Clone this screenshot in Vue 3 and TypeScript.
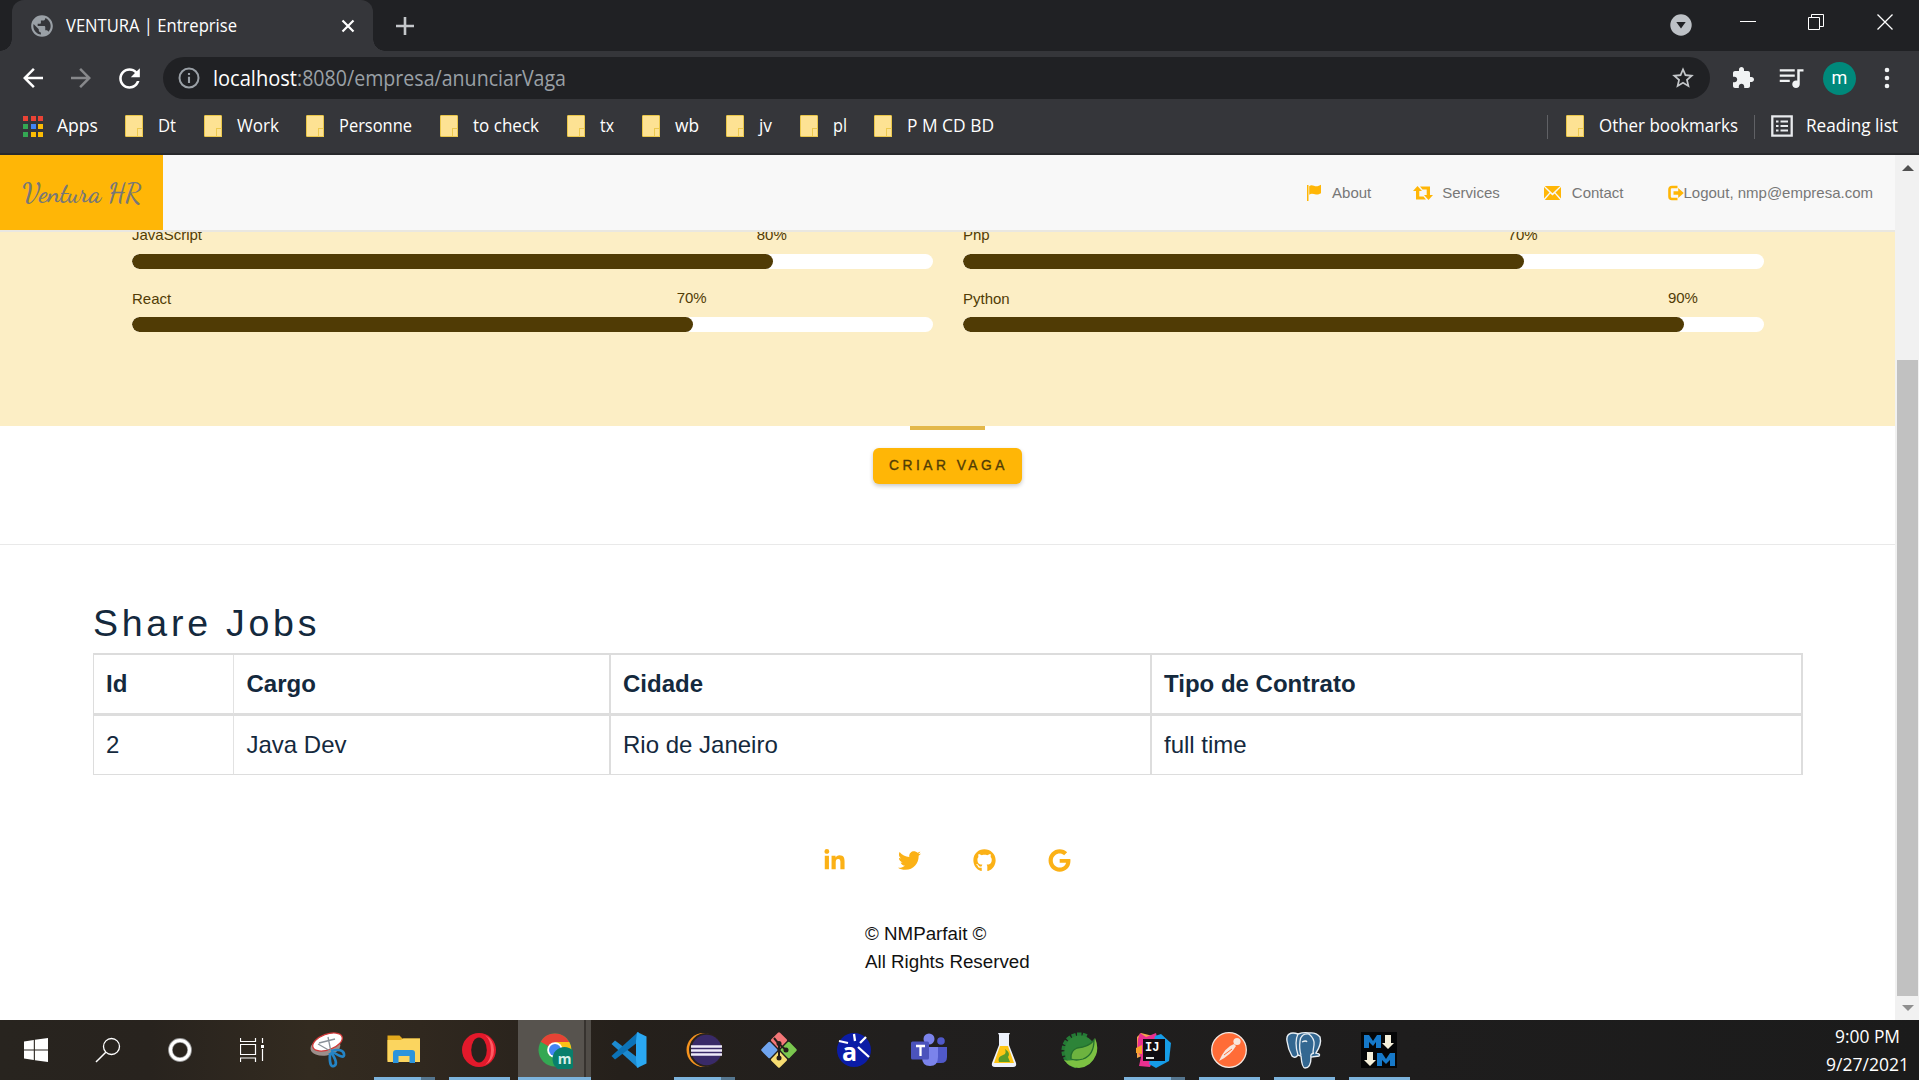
<script setup lang="ts">
import { h } from 'vue'

interface FitProps { text: string; w: number; size?: number; color?: string; family?: string; slant?: string; weight?: number }

// Single line of text set to an exact advance width.
const FitText = (p: FitProps) => {
  const size = p.size ?? 18
  const height = Math.round(size * 1.5)
  return h('svg', { width: p.w, height, style: 'display:block;overflow:visible;flex:none' }, [
    h('text', {
      x: 0, y: Math.round(size * 1.08), textLength: p.w, lengthAdjust: 'spacingAndGlyphs',
      fill: p.color ?? '#ffffff', 'font-size': size, 'font-style': p.slant ?? 'normal', 'font-weight': p.weight ?? 400,
      'font-family': p.family ?? '"Segoe UI", "Open Sans", "Noto Sans", sans-serif',
    }, p.text),
  ])
}
FitText.props = ['text', 'w', 'size', 'color', 'family', 'slant', 'weight']

const bookmarks: { name: string; w: number; gap: number }[] = [
  { name: 'Dt', w: 18, gap: 28 },
  { name: 'Work', w: 42, gap: 27 },
  { name: 'Personne', w: 73, gap: 28 },
  { name: 'to check', w: 66, gap: 28 },
  { name: 'tx', w: 14, gap: 28 },
  { name: 'wb', w: 24, gap: 27 },
  { name: 'jv', w: 13, gap: 28 },
  { name: 'pl', w: 14, gap: 27 },
  { name: 'P M CD BD', w: 87, gap: 0 },
]

const appColors: string[] = ['#ea4335', '#ea4335', '#ea4335', '#34a853', '#4285f4', '#fbbc04', '#34a853', '#fbbc04', '#fbbc04']

interface Skill { name: string; value: number }
const skillColumns: Skill[][] = [
  [{ name: 'JavaScript', value: 80 }, { name: 'React', value: 70 }],
  [{ name: 'Php', value: 70 }, { name: 'Python', value: 90 }],
]

const headers: string[] = ['Id', 'Cargo', 'Cidade', 'Tipo de Contrato']
const jobs: string[][] = [['2', 'Java Dev', 'Rio de Janeiro', 'full time']]

const social: string[] = [
  'M100.28 448H7.4V148.9h92.88zM53.79 108.1C24.09 108.1 0 83.5 0 53.8a53.79 53.79 0 0 1 107.58 0c0 29.7-24.1 54.3-53.79 54.3zM447.9 448h-92.68V302.4c0-34.7-.7-79.2-48.29-79.2-48.29 0-55.69 37.7-55.69 76.7V448h-92.78V148.9h89.08v40.8h1.3c12.4-23.5 42.69-48.3 87.88-48.3 94 0 111.28 61.9 111.28 142.3V448z',
  'M459.37 151.716c.325 4.548.325 9.097.325 13.645 0 138.72-105.583 298.558-298.558 298.558-59.452 0-114.68-17.219-161.137-47.106 8.447.974 16.568 1.299 25.34 1.299 49.055 0 94.213-16.568 130.274-44.832-46.132-.975-84.792-31.188-98.112-72.772 6.498.974 12.995 1.624 19.818 1.624 9.421 0 18.843-1.3 27.614-3.573-48.081-9.747-84.143-51.98-84.143-102.985v-1.299c13.969 7.797 30.214 12.67 47.431 13.319-28.264-18.843-46.781-51.005-46.781-87.391 0-19.492 5.197-37.36 14.294-52.954 51.655 63.675 129.3 105.258 216.365 109.807-1.624-7.797-2.599-15.918-2.599-24.04 0-57.828 46.782-104.934 104.934-104.934 30.213 0 57.502 12.67 76.67 33.137 23.715-4.548 46.456-13.32 66.599-25.34-7.798 24.366-24.366 44.833-46.132 57.827 21.117-2.273 41.584-8.122 60.426-16.243-14.292 20.791-32.161 39.308-52.628 54.253z',
  'M165.9 397.4c0 2-2.3 3.6-5.2 3.6-3.3.3-5.6-1.3-5.6-3.6 0-2 2.3-3.6 5.2-3.6 3-.3 5.6 1.3 5.6 3.6zM244.8 8C106.1 8 0 113.3 0 252c0 110.9 69.8 205.8 169.5 239.2 12.8 2.3 17.3-5.6 17.3-12.1 0-6.2-.3-40.4-.3-61.4 0 0-70 15-84.7-29.8 0 0-11.4-29.1-27.8-36.6 0 0-22.9-15.7 1.6-15.4 0 0 24.9 2 38.6 25.8 21.9 38.6 58.6 27.5 72.9 20.9 2.3-16 8.8-27.1 16-33.7-55.9-6.2-112.3-14.3-112.3-110.5 0-27.5 7.6-41.3 23.6-58.9-2.6-6.5-11.1-33.3 2.6-67.9 20.9-6.5 69 27 69 27 20-5.6 41.5-8.5 62.8-8.5s42.8 2.9 62.8 8.5c0 0 48.1-33.6 69-27 13.7 34.7 5.2 61.4 2.6 67.9 16 17.7 25.8 31.5 25.8 58.9 0 96.5-58.9 104.2-114.8 110.5 9.2 7.9 17 22.9 17 46.4 0 33.7-.3 75.4-.3 83.6 0 6.5 4.6 14.4 17.3 12.1C428.2 457.8 496 362.9 496 252 496 113.3 383.5 8 244.8 8z',
  'M488 261.8C488 403.3 391.1 504 248 504 110.8 504 0 393.2 0 256S110.8 8 248 8c66.8 0 123 24.5 166.3 64.9l-67.5 64.9C258.5 52.6 94.3 116.6 94.3 256c0 86.5 69.1 156.6 153.7 156.6 98.2 0 135-70.4 140.8-106.9H248v-85.3h236.1c2.3 12.7 3.9 24.9 3.9 41.4z',
]
const socialBoxes: string[] = ['0 0 448 512', '0 0 512 512', '0 0 496 512', '0 0 488 512']

interface Task { id: string; bar?: 'full' | 'split'; active?: boolean }
const tasks: Task[] = [
  { id: 'snip' }, { id: 'files', bar: 'split' }, { id: 'opera', bar: 'full' }, { id: 'chrome', active: true },
  { id: 'code' }, { id: 'eclipse', bar: 'split' }, { id: 'git' }, { id: 'astah' }, { id: 'teams' }, { id: 'flask' },
  { id: 'spring' }, { id: 'idea', bar: 'split' }, { id: 'postman', bar: 'full' }, { id: 'postgres', bar: 'full' }, { id: 'markdown', bar: 'full' },
]
const teeth: number[] = Array.from({ length: 10 }, (_, i) => 110 + i * 20)
</script>

<template>
  <div class="screen">
    <header class="chrome">
      <div class="tabstrip">
        <div class="tab">
          <svg class="globe" width="26" height="26" viewBox="0 0 24 24"><path fill="#9aa0a6" d="M12 2C6.48 2 2 6.48 2 12s4.48 10 10 10 10-4.48 10-10S17.52 2 12 2zm-1 17.93c-3.95-.49-7-3.85-7-7.93 0-.62.08-1.21.21-1.79L9 15v1c0 1.1.9 2 2 2v1.93zm6.9-2.54c-.26-.81-1-1.39-1.9-1.39h-1v-3c0-.55-.45-1-1-1H8v-2h2c.55 0 1-.45 1-1V7h2c1.1 0 2-.9 2-2v-.41c2.93 1.19 5 4.06 5 7.41 0 2.08-.8 3.97-2.1 5.39z" /></svg>
          <FitText class="tab-title" text="VENTURA | Entreprise" :w="171" />
          <svg class="tab-close" width="14" height="14" viewBox="0 0 14 14"><path d="M1.5 1.5l11 11M12.5 1.5l-11 11" stroke="#fff" stroke-width="2.2" /></svg>
        </div>
        <svg class="plus" width="18" height="18" viewBox="0 0 18 18"><path d="M9 0v18M0 9h18" stroke="#c4c7ca" stroke-width="2.6" /></svg>
        <div class="win">
          <svg width="22" height="22" viewBox="0 0 22 22"><circle cx="11" cy="11" r="10.7" fill="#bdc1c6" /><path d="M6.3 8h9.4L11 14.6z" fill="#202124" /></svg>
          <svg class="w-min" width="16" height="16" viewBox="0 0 16 16"><path d="M0 7.5h16" stroke="#fff" /></svg>
          <svg class="w-max" width="16" height="16" viewBox="0 0 16 16"><path d="M.5 3.5h11v12H.5zM3.5 3.5v-3h12v12h-4" stroke="#fff" fill="none" /></svg>
          <svg class="w-close" width="16" height="16" viewBox="0 0 16 16"><path d="M.5 .5l15 15M15.5 .5l-15 15" stroke="#fff" stroke-width="1.3" /></svg>
        </div>
      </div>

      <div class="toolbar">
        <div class="nav-buttons">
          <svg width="30" height="30" viewBox="0 0 24 24"><path fill="#fff" d="M20 11H7.83l5.59-5.59L12 4l-8 8 8 8 1.41-1.41L7.83 13H20z" /></svg>
          <svg width="30" height="30" viewBox="0 0 24 24"><path fill="#87888b" d="M12 4l-1.41 1.41L16.17 11H4v2h12.17l-5.58 5.59L12 20l8-8z" /></svg>
          <svg width="31" height="31" viewBox="0 0 24 24"><path fill="#fff" d="M17.65 6.35C16.2 4.9 14.21 4 12 4c-4.42 0-7.99 3.58-7.99 8s3.57 8 7.99 8c3.73 0 6.84-2.55 7.73-6h-2.08c-.82 2.33-3.04 4-5.65 4-3.31 0-6-2.69-6-6s2.69-6 6-6c1.66 0 3.14.69 4.22 1.78L13 11h7V4l-2.35 2.35z" /></svg>
        </div>
        <div class="omnibox">
          <svg class="info" width="22" height="22" viewBox="0 0 22 22"><circle cx="11" cy="11" r="9.5" fill="none" stroke="#9aa0a6" stroke-width="2" /><path d="M11 9.7v6.3M11 6v2.1" stroke="#9aa0a6" stroke-width="2.1" /></svg>
          <FitText class="url" text="localhost" :w="84" :size="21" />
          <FitText class="url" text=":8080/empresa/anunciarVaga" :w="269" :size="21" color="#9aa0a6" />
          <svg class="star" width="26" height="26" viewBox="0 0 24 24"><path fill="#c4c7ca" d="M22 9.24l-7.19-.62L12 2 9.19 8.63 2 9.24l5.46 4.73L5.82 21 12 17.27 18.18 21l-1.63-7.03L22 9.24zM12 15.4l-3.76 2.27 1-4.28-3.32-2.88 4.38-.38L12 6.1l1.71 4.04 4.38.38-3.32 2.88 1 4.28L12 15.4z" /></svg>
        </div>
        <svg class="puzzle" width="24" height="24" viewBox="0 0 24 24"><path fill="#f1f3f4" d="M20.5 11H19V7c0-1.1-.9-2-2-2h-4V3.5C13 2.12 11.88 1 10.5 1S8 2.12 8 3.5V5H4c-1.1 0-1.99.9-1.99 2v3.8H3.5c1.49 0 2.7 1.21 2.7 2.7s-1.21 2.7-2.7 2.7H2V20c0 1.1.9 2 2 2h3.8v-1.5c0-1.49 1.21-2.7 2.7-2.7 1.49 0 2.7 1.21 2.7 2.7V22H17c1.1 0 2-.9 2-2v-4h1.5c1.38 0 2.5-1.12 2.5-2.5S21.88 11 20.5 11z" /></svg>
        <svg class="music" width="30" height="30" viewBox="0 0 24 24"><path fill="#f1f3f4" d="M15 5H3v1.800h12V5zm0 4.200H3V11h12V9.200zM3 15.200h8v-1.800H3v1.800zM17 5v9.180c-.31-.11-.65-.18-1-.18-1.660 0-3 1.340-3 3s1.340 3 3 3 3-1.340 3-3V6.800h3V5h-5z" /></svg>
        <div class="avatar">m</div>
        <svg class="dots" width="6" height="22" viewBox="0 0 6 22"><circle v-for="y in [3, 11, 19]" :key="y" cx="3" :cy="y" r="2.3" fill="#f1f3f4" /></svg>
      </div>

      <div class="bookmarks">
        <div class="apps-grid"><i v-for="(c, i) in appColors" :key="i" :style="{ background: c }"></i></div>
        <FitText class="apps-label" text="Apps" :w="41" />
        <div v-for="b in bookmarks" :key="b.name" class="bm" :style="{ marginRight: b.gap + 'px' }">
          <span class="folder"></span><FitText :text="b.name" :w="b.w" />
        </div>
        <div class="bm-right">
          <span class="sep"></span>
          <div class="bm other"><span class="folder"></span><FitText text="Other bookmarks" :w="139" /></div>
          <span class="sep"></span>
          <svg class="reading" width="22" height="22" viewBox="0 0 22 22"><path d="M1.300 1.300h19.400v19.400H1.300z" fill="none" stroke="#e8eaed" stroke-width="2.300" /><path d="M5 6.500h2.500M5 11h2.500M5 15.500h2.500M9.500 6.500H17M9.500 11H17M9.500 15.500H17" stroke="#e8eaed" stroke-width="2" /></svg>
          <FitText text="Reading list" :w="92" />
        </div>
      </div>
    </header>

    <div class="viewport">
      <main class="page">
        <nav class="navbar">
          <a class="brand"><FitText text="Ventura HR" :w="119" :size="28" :weight="700" color="#777777" family="'Dancing Script', 'Liberation Serif', cursive" /></a>
          <div class="links">
            <a class="l-about">
              <svg width="16" height="18" viewBox="0 0 16 18"><path fill="#ffb606" d="M1 1h1.500v16H1zM3.200 2.200C6-.2 8.500 3 11.500 2.200c1.500-.4 2.500-1 3.500-1.400v8.400c-2 1-3 1.500-5 1.300-2.500-.3-4.500-1.500-6.800.3z" /></svg>
              <span>About</span></a>
            <a class="l-services">
              <svg width="20" height="16" viewBox="0 0 20 16"><path fill="#ffb606" d="M4.500 1L9 6H6.300v5.500h4.200L13 14.500H3V6H0zM7 1.500h10V10h3l-4.500 5L11 10h2.700V4.500H9.500z" /></svg>
              <span>Services</span></a>
            <a class="l-contact">
              <svg width="17" height="14" viewBox="0 0 17 14"><path fill="#ffb606" d="M.8 0h15.400L8.500 7.200zM0 1l5.500 5.600L0 12.600zM17 1v11.600l-5.500-6zM6.300 7.400l2.200 2 2.200-2 5.500 6.600H.8z" /></svg>
              <span>Contact</span></a>
            <a class="l-logout">
              <svg width="16" height="16" viewBox="0 0 16 16"><path fill="none" stroke="#ffb606" stroke-width="2.600" d="M9.500 2H4Q1.500 2 1.500 4.500v7Q1.500 14 4 14h5.500" /><path fill="#ffb606" d="M5.500 6.200h4.700V3l5.600 5-5.600 5V9.800H5.500z" /></svg>
              <span>Logout, nmp@empresa.com</span></a>
          </div>
        </nav>

        <section class="skills">
          <div v-for="(col, ci) in skillColumns" :key="ci" class="skill-col">
            <div v-for="s in col" :key="s.name" class="skill">
              <div class="skill-head"><span class="name">{{ s.name }}</span><span class="pct" :style="{ left: s.value + '%' }">{{ s.value }}%</span></div>
              <div class="track"><div class="fill" :style="{ width: s.value + '%' }"></div></div>
            </div>
          </div>
        </section>

        <section class="create">
          <div class="accent"></div>
          <button class="btn">CRIAR VAGA</button>
        </section>

        <section class="jobs">
          <h2>Share Jobs</h2>
          <table>
            <colgroup><col class="c1" /><col class="c2" /><col class="c3" /><col class="c4" /></colgroup>
            <thead><tr><th v-for="t in headers" :key="t">{{ t }}</th></tr></thead>
            <tbody><tr v-for="(row, r) in jobs" :key="r"><td v-for="cell in row" :key="cell">{{ cell }}</td></tr></tbody>
          </table>
        </section>

        <footer>
          <div class="social">
            <svg v-for="(d, i) in social" :key="i" width="23" height="23" :viewBox="socialBoxes[i]"><path :d="d" fill="#fbb116" /></svg>
          </div>
          <p>© NMParfait ©<br />All Rights Reserved</p>
        </footer>
      </main>
      <aside class="scrollbar">
        <span class="arrow up"></span>
        <span class="thumb"></span>
        <span class="arrow down"></span>
      </aside>
    </div>

    <div class="taskbar">
      <div class="sys"><svg width="24" height="24" viewBox="0 0 24 24"><path fill="#fff" d="M0 3.400l9.800-1.400v9.500H0zM10.900 1.800L24 0v11.500H10.900zM0 12.500h9.800V22L0 20.600zM10.900 12.500H24V24l-13.100-1.800z" /></svg></div>
      <div class="sys"><svg width="26" height="26" viewBox="0 0 26 26"><circle cx="16.500" cy="9.500" r="8" fill="none" stroke="#fff" stroke-width="1.300" /><path d="M10.800 15.200L1 25" stroke="#fff" stroke-width="1.500" /></svg></div>
      <div class="sys"><svg width="24" height="24" viewBox="0 0 24 24"><circle cx="12" cy="12" r="9.600" fill="none" stroke="#999" stroke-width="4.600" /><circle cx="12" cy="12" r="9.500" fill="none" stroke="#fff" stroke-width="3" /></svg></div>
      <div class="sys"><svg width="24" height="24" viewBox="0 0 24 24"><path d="M.5 0v3.500h15V0M.5 6.500h15v10H.5zM.5 24v-4h15v4M22.500 0v5M22.500 11v12" fill="none" stroke="#fff" stroke-width="1.200" /><path d="M21 7h3v3h-3z" fill="#fff" /></svg></div>
      <div class="tasks">
        <div v-for="t in tasks" :key="t.id" class="task" :class="[t.bar, { active: t.active }]">
          <svg width="38" height="38" viewBox="0 0 38 38">
            <g v-if="t.id === 'snip'">
              <ellipse cx="16" cy="16" rx="15" ry="8.500" fill="#9b8f8b" transform="rotate(-8 16 20)" /><ellipse cx="17.500" cy="11" rx="15.500" ry="7.800" fill="#fff" stroke="#d23a3a" stroke-width="1.300" transform="rotate(-20 17.500 11)" />
              <path d="M18 6l3 15M8 13l14 8M9 12l16-4" stroke="#8a9199" stroke-width="1.300" /><path d="M21 20q12-3 13 3t-11-2M21 21q8 12 3 14t-4-13" fill="none" stroke="#2484c6" stroke-width="2.700" />
            </g>
            <g v-else-if="t.id === 'files'">
              <path d="M2.500 4.500h12l3 3H35v22H2.500z" fill="#e2a91d" /><path d="M2.500 9h13l3-1.500H35V31H2.500z" fill="#fbd55f" /><path d="M8 32V22q0-3 3-3h16q3 0 3 3v10h-5.500v-7h-11v7z" fill="#2b94dd" />
            </g>
            <g v-else-if="t.id === 'opera'">
              <circle cx="19" cy="19" r="17" fill="#e3192b" /><path d="M25 4a17 17 0 0 1 0 30q6-5 6-15T25 4" fill="#ff5a63" /><ellipse cx="19" cy="19" rx="7.800" ry="12.500" fill="#29221d" />
            </g>
            <g v-else-if="t.id === 'chrome'" transform="translate(2 0)">
              <circle cx="18" cy="19" r="16.500" fill="#34a853" /><path d="M18 11h14.300A16.500 16.500 0 0 1 18 35.500l7-12z" fill="#fbc116" /><path d="M18 19L3.700 10.700A16.500 16.500 0 0 1 32.300 11H18z" fill="#e54335" /><circle cx="18" cy="19" r="7.800" fill="#fff" /><circle cx="18" cy="19" r="6" fill="#4285f4" />
              <circle cx="27.500" cy="28" r="12" fill="#087f6c" /><text x="27.500" y="32.500" text-anchor="middle" font-size="14" font-weight="700" font-family="Open Sans, sans-serif" fill="#d6efe9">m</text>
            </g>
            <g v-else-if="t.id === 'code'">
              <path d="M1.500 13l3.500-3.500 24 18.300v8.700L27 36z" fill="#1d8bd1" /><path d="M1.500 25L5 28.500l24-18.300V1L27 2z" fill="#0c73b8" /><path d="M27 1l9.500 4.500v27L27 37l-1-8V10z" fill="#2aa8f2" />
            </g>
            <g v-else-if="t.id === 'eclipse'">
              <circle cx="18.500" cy="19" r="17" fill="#f7941e" /><circle cx="21" cy="19" r="17" fill="#29221d" /><circle cx="21.500" cy="19" r="15.300" fill="#392a68" /><path d="M6 15.500h31M6 19.500h31M6 23.500h31" stroke="#eeeaf8" stroke-width="2.400" />
            </g>
            <g v-else-if="t.id === 'git'">
              <g transform="rotate(45 19 19)"><rect x="6" y="6" width="12.300" height="12.300" rx="1.500" fill="#f27677" /><rect x="19.700" y="6" width="12.300" height="12.300" rx="1.500" fill="#7ac74f" /><rect x="6" y="19.700" width="12.300" height="12.300" rx="1.500" fill="#6fa4ef" /><rect x="19.700" y="19.700" width="12.300" height="12.300" rx="1.500" fill="#f6dc72" /></g>
              <path d="M14 7l5 6v14M19 13l7 6" fill="none" stroke="#241d1a" stroke-width="2" /><circle cx="19" cy="12.500" r="2.500" fill="#241d1a" /><circle cx="26" cy="19" r="2.500" fill="#241d1a" /><circle cx="19" cy="27" r="2.500" fill="#241d1a" />
            </g>
            <g v-else-if="t.id === 'astah'">
              <circle cx="19" cy="19" r="17" fill="#0b1ca6" /><text x="7" y="30" font-size="25" font-weight="700" font-family="Open Sans, sans-serif" fill="#fff">a</text><path d="M19 3l1 7M31 6l-6 6M4 10l9 2M23 16l11 10" stroke="#fff" stroke-width="2.300" />
            </g>
            <g v-else-if="t.id === 'teams'">
              <circle cx="19" cy="8" r="5.500" fill="#7b83eb" /><circle cx="31" cy="10" r="3.800" fill="#5059c9" /><path d="M26 16h11v10q0 6-6 6h-5z" fill="#5059c9" /><path d="M12 16h16v10q0 9-8 9t-8-9z" fill="#7b83eb" /><rect x="1" y="10.500" width="18" height="18" rx="1.500" fill="#4b53bc" /><path d="M6 15h9M10.500 15v10" stroke="#fff" stroke-width="2.300" />
            </g>
            <g v-else-if="t.id === 'flask'">
              <path d="M13 2h12l-1 2v10l7 18q1 4-3 4H10q-4 0-3-4l7-18V4z" fill="#edf1fb" /><path d="M15 15h8l6 17H9z" fill="#fdc516" /><path d="M14 31q-2-5 4-7 4-1 2-6 6 4 3 8l2 5z" fill="#5a9b28" />
            </g>
            <g v-else-if="t.id === 'spring'">
              <rect v-for="a in teeth" :key="a" x="31" y="17" width="6.500" height="4.500" fill="#247a35" :transform="`rotate(${a} 19.500 19.500)`" />
              <circle cx="20" cy="20" r="15.500" fill="#2d8438" /><path d="M35 7q4 9 1 17-5 12-17 13-9 0-15-8 9 2 17-3 9-6 14-19" fill="#7cc142" /><path d="M11 28q-1-8 6-11 12-1 17-8 0 15-11 19-7 2-12 0" fill="#6db33f" stroke="#246f2e" stroke-width="1.300" />
            </g>
            <g v-else-if="t.id === 'idea'">
              <path d="M2 6l4-4 12 3 3 14-19 8z" fill="#f7a44c" /><path d="M3 8l2-6 6 4 10-4 3 13-9 21-11-1 2-9-4-6z" fill="#e9308f" /><path d="M1 17l6-3v9l-6-1z" fill="#f7a02c" /><path d="M20 5l6-2 10 9-2 18-13 7-7-4z" fill="#169ce8" /><rect x="8" y="8" width="22" height="22" fill="#100c12" /><text x="10" y="19.500" font-size="12" font-weight="700" font-family="Liberation Mono, monospace" fill="#fff">IJ</text><path d="M11 27h8" stroke="#fff" stroke-width="1.800" />
            </g>
            <g v-else-if="t.id === 'postman'">
              <circle cx="19" cy="19" r="17.300" fill="#ff6c37" stroke="#f3e6df" stroke-width="1.300" /><path d="M9 30q6-14 15-17l2 2q-5 9-17 15" fill="#f8e5dc" /><circle cx="27" cy="10.500" r="3.600" fill="#f8e5dc" /><path d="M14 24l8-6M28 14l-3 5" stroke="#ff6c37" />
            </g>
            <g v-else-if="t.id === 'postgres'">
              <path d="M13 3C5 0 1 4 2 10q1 8 5 15 3 3 6-1l3 1q1 12 4 12 6 0 6-11l8-1q2-2-3-3 6-9 4-16-4-5-11-4-5-1-11 1z" fill="#336791" stroke="#e8eef3" stroke-width="1.400" /><path d="M13 3q-4 8 0 21M24 3q-8-1-9 7t1 14M24 3q6 5 5 11t-1 8M17 11q4-2 5 0M26 26q-1-3 3-4" fill="none" stroke="#e8eef3" stroke-width="1.300" />
            </g>
            <g v-else>
              <rect x="1" y="1" width="36" height="36" fill="#050607" /><path d="M4 4h5l4 6 4-6h4v13h-5v-6l-3 4-4-4v6H4zM17 22h5l4 6 4-6h5v13h-5v-6l-4 4-4-4v6h-5z" fill="#1679c9" /><path d="M25 4h6v8h3l-6 6-6-6h3zM7 21h6v8h3l-6 6-6-6h3z" fill="#f5f0db" />
            </g>
          </svg>
        </div>
      </div>
      <div class="clock"><FitText text="9:00 PM" :w="65" /><FitText text="9/27/2021" :w="83" /></div>
    </div>
  </div>
</template>

<style>
body { margin: 0; overflow: hidden; }
</style>

<style scoped>
* { box-sizing: border-box; }
.screen { width: 1919px; height: 1080px; display: flex; flex-direction: column; overflow: hidden; background: #fff; font-family: Arial, "Liberation Sans", sans-serif; }
svg { display: block; flex: none; }

.chrome { height: 155px; flex: none; background: #35363a; border-bottom: 2px solid #28292c; }
.tabstrip { height: 51px; background: #202124; display: flex; }
.tab { position: relative; width: 361px; margin-left: 12px; height: 51px; background: #35363a; border-radius: 12px 12px 0 0; display: flex; align-items: center; padding-left: 17px; }
.tab::before, .tab::after { content: ""; position: absolute; bottom: 0; width: 12px; height: 12px; }
.tab::before { left: -12px; background: radial-gradient(circle at 0 0, #202124 11.500px, #35363a 12px); }
.tab::after { right: -12px; background: radial-gradient(circle at 100% 0, #202124 11.500px, #35363a 12px); }
.globe { margin-right: 11px; }
.tab-title { margin-top: 2px; }
.tab-close { margin-left: 104px; }
.plus { margin: 17px 0 0 23px; }
.win { margin-left: auto; display: flex; padding-top: 14px; padding-right: 26px; }
.w-min { margin-left: 48px; }
.w-max { margin-left: 52px; }
.w-close { margin-left: 53px; }

.toolbar { height: 54px; display: flex; align-items: center; padding-left: 18px; }
.nav-buttons { display: flex; gap: 18px; width: 145px; }
.omnibox { width: 1547px; height: 42px; border-radius: 21px; background: #202124; display: flex; align-items: center; padding: 0 14px 0 15px; }
.info { margin-right: 13px; }
.url { margin-top: 2px; }
.star { margin-left: auto; }
.puzzle { margin-left: 21px; }
.music { margin-left: 21px; }
.avatar { width: 33px; height: 33px; margin-left: 17px; border-radius: 50%; background: #00897b; color: #fff; font: 18px/31px Roboto, sans-serif; text-align: center; }
.dots { margin-left: 28px; }

.bookmarks { height: 43px; display: flex; align-items: center; padding-left: 23px; }
.apps-grid { display: grid; grid-template-columns: repeat(3, 5px); gap: 3px 2.500px; width: 20px; margin-right: 14px; }
.apps-grid i { height: 5px; }
.apps-label { margin-right: 27px; }
.bm { display: flex; align-items: center; gap: 15px; }
.folder { width: 18px; height: 22px; background: #fde293; border: 1px solid #e9c649; border-radius: 1px; position: relative; }
.folder::after { content: ""; position: absolute; right: -1px; bottom: -1px; width: 4px; height: 7px; border: 1px solid #ecc94f; background: #fde293; }
.bookmarks .folder { margin-top: -1px; }
.bm-right { margin-left: auto; display: flex; align-items: center; padding-right: 21px; }
.sep { width: 1px; height: 24px; background: #606165; }
.other { margin: 0 16px 0 18px; }
.reading { margin: -1px 13px 0 16px; }

.viewport { height: 865px; display: flex; }
.page { width: 1895px; background: #fff; overflow: hidden; }
.navbar { height: 77px; display: flex; justify-content: space-between; background: #f8f8f8; border-bottom: 2px solid #e9e7e1; }
.brand { width: 163px; height: 75px; background: #ffb606; display: flex; align-items: center; padding: 0 0 0 22px; }
.links { display: flex; align-items: center; padding: 0 22px 0 0; color: #777; font-size: 15px; }
.links a { display: flex; align-items: center; }
.l-about span { margin-left: 10px; }
.l-services { margin-left: 42px; }
.l-services span { margin-left: 9px; }
.l-contact { margin-left: 44px; }
.l-contact span { margin-left: 11px; }
.l-logout { margin-left: 44px; }

.skills { height: 194px; background: #fceec5; overflow: hidden; display: flex; gap: 30px; padding: 0 132px; }
.skill-col { width: 801px; flex: none; margin-top: -8px; }
.skill { margin-bottom: 18px; }
.skill-head { position: relative; height: 30px; font-size: 15px; line-height: 22px; color: #513c05; }
.skill + .skill .name { display: block; padding-top: 1px; }
.pct { position: absolute; top: 0; transform: translateX(calc(-50% - 1px)); }
.track { height: 15px; border-radius: 8px; background: #fff; overflow: hidden; }
.fill { height: 15px; border-radius: 8px; background: #503b05; }

.create { height: 119px; border-bottom: 1px solid #e9e9e9; display: flex; flex-direction: column; align-items: center; }
.accent { width: 75px; height: 4px; background: #e3b84b; }
.btn { margin-top: 18px; width: 149px; height: 36px; padding: 0 0 1px 2px; border: 0; border-radius: 6px; background: #ffb606; box-shadow: 0 2px 4px rgba(0, 0, 0, .22); color: #513c05; font: 400 13.750px/35px Arial, "Liberation Sans", sans-serif; -webkit-text-stroke: .35px #513c05; letter-spacing: 3.500px; white-space: nowrap; }

.jobs { padding: 57px 0 0 93px; color: #14293d; }
h2 { margin: 0; height: 51px; font-size: 37.500px; line-height: 42px; font-weight: 400; letter-spacing: 3.750px; }
table { width: 1710px; border-collapse: separate; border-spacing: 0; table-layout: fixed; border-left: 1px solid #ddd; border-top: 2px solid #dcdcdc; font-size: 24px; }
.c1 { width: 140px; } .c2 { width: 377px; } .c3 { width: 541px; } .c4 { width: 651px; }
th, td { height: 59px; padding: 0 0 0 12px; text-align: left; border-right: 2px solid #ddd; border-bottom: 1px solid #ddd; vertical-align: middle; }
th:first-child, td:first-child { border-right: 1px solid #e2e2e2; }
th:nth-child(2), td:nth-child(2) { padding-left: 12.500px; }
th { height: 61px; border-bottom: 3px solid #ddd; }

footer { display: flex; flex-direction: column; align-items: center; }
.social { display: flex; gap: 52px; margin: 74px 1px 0 0; }
footer p { width: 165px; margin: 48px 0 0 0; font-size: 18.750px; line-height: 28.200px; color: #111; white-space: nowrap; }

.scrollbar { width: 24px; background: #f1f1f1; display: flex; flex-direction: column; align-items: center; padding-left: 1px; }
.arrow { width: 0; height: 0; border: 6px solid transparent; }
.up { border-bottom-color: #505050; border-top-width: 0; margin: 10px 0 189px; }
.thumb { width: 21px; height: 636px; background: #c1c1c1; }
.down { border-top-color: #8f8f8f; border-bottom-width: 0; margin-top: 9px; }

.taskbar { height: 60px; display: flex; background: linear-gradient(90deg, #28241f 0, #28231e 150px, #332b20 310px, #30281f 420px, #25201b 620px, #211f1e 900px, #1e1d1d 1400px, #1b1b1b 1919px); }
.sys { width: 72px; display: flex; align-items: center; justify-content: center; }
.tasks { display: flex; margin-left: 3px; }
.task { position: relative; width: 75px; display: flex; align-items: center; justify-content: center; }
.active { background: linear-gradient(90deg, transparent 2px, #57534e 2px 68px, #37332f 68px 70px, #504c47 70px); }
.full::after, .split::after, .active::after { content: ""; position: absolute; left: 8px; bottom: 0; width: 61px; height: 3px; background: #7cb3dc; }
.split::after { background: linear-gradient(90deg, #7cb3dc 47px, #55768f 47px); }
.active::after { left: 2px; width: 73px; }
.clock { margin-left: auto; width: 104px; padding-top: 4px; display: flex; flex-direction: column; align-items: center; gap: 1px; }
</style>
